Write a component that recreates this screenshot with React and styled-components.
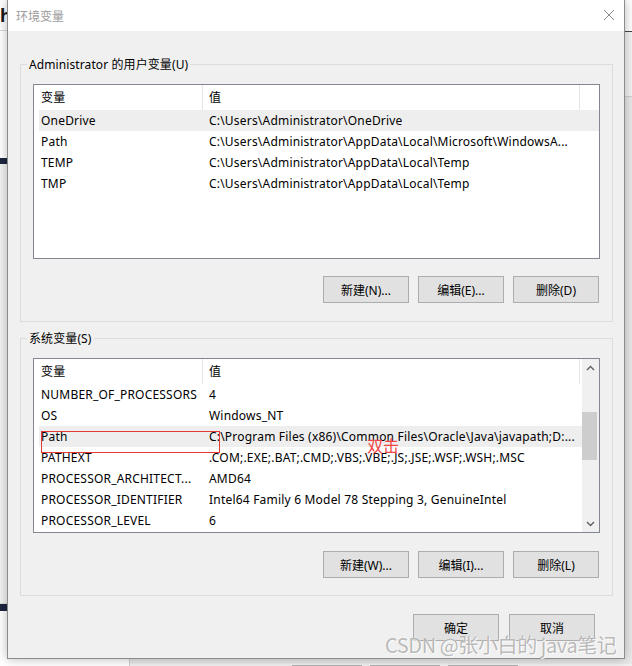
import styled, { createGlobalStyle } from 'styled-components';

const GlobalStyle = createGlobalStyle`
  html, body { margin: 0; padding: 0; }
  body {
    width: 632px;
    height: 666px;
    overflow: hidden;
    font-family: "Noto Sans", "Noto Sans CJK SC", sans-serif;
    font-size: 12px;
    color: #000;
  }
  * { box-sizing: border-box; }
`;

const Desktop = styled.div`
  position: relative;
  width: 632px;
  height: 666px;
  overflow: hidden;
  background: #f0f0f0;
`;

/* window behind the dialog */
const BackWindow = styled.div`
  position: absolute;
  inset: 0;
  display: grid;
  grid-template-columns: 130px 1fr;
`;

const BackNav = styled.div`
  display: flex;
  flex-direction: column;
  background: #fbfbfb;
  border-right: 1px solid #cfcfcf;
`;

const NavBlock = styled.div`
  height: ${(p) => p.$h}px;
  background: ${(p) => p.$bg || 'transparent'};
  border-bottom: 1px solid ${(p) => p.$line || 'transparent'};
  font-size: 18px;
  font-weight: 700;
  line-height: ${(p) => p.$h}px;
  color: #1a1a1a;
  overflow: hidden;
  white-space: nowrap;
`;

const BackMain = styled.div`
  display: flex;
  flex-direction: column;
`;

const BackHeader = styled.div`
  height: 32px;
  background: #fff;
  border-bottom: 1px solid #444;
`;

const BackToolbar = styled.div`
  height: 65px;
  background: #f3f3f3;
  border-bottom: 1px solid #d0d0d0;
`;

const BackContent = styled.div`
  flex: 1;
  background: #e9e9e9;
`;

const BackFooter = styled.div`
  display: flex;
  gap: 8px;
  height: 7px;
  padding-left: 162px;
  overflow: hidden;
  background: #f0f0f0;
`;

const BackButton = styled.div`
  width: 70px;
  height: 24px;
  margin-top: 1px;
  border: 1px solid #adadad;
  background: #e1e1e1;
  color: ${(p) => (p.$disabled ? '#a0a0a0' : '#000')};
  text-align: center;
  line-height: 22px;
  font-size: 12px;
  padding-top: 5px;
`;

/* the dialog */
const Dialog = styled.div`
  position: absolute;
  left: 7px;
  top: 0;
  width: 618px;
  height: 659px;
  display: flex;
  flex-direction: column;
  background: #f0f0f0;
  border: 1px solid #8c8c8c;
  border-top: none;
  box-shadow: 0 0 10px rgba(0, 0, 0, 0.28);
`;

const TitleBar = styled.div`
  height: 31px;
  flex-shrink: 0;
  display: flex;
  align-items: center;
  justify-content: space-between;
  padding: 0 9px 0 8px;
  background: #fff;
`;

const Title = styled.span`
  font-family: "Noto Sans CJK SC", sans-serif;
  font-size: 12px;
  color: #9b9b9b;
`;

const CloseButton = styled.div`
  width: 12px;
  height: 12px;
  display: flex;
  margin-top: -1px;
`;

const Body = styled.div`
  display: flex;
  flex-direction: column;
  padding: 0 11px 0 12px;
`;

const Group = styled.fieldset`
  margin: ${(p) => p.$top}px 0 0;
  padding: 11px 12px ${(p) => p.$bottom}px 12px;
  border: 1px solid #dcdcdc;
  min-inline-size: 0;
`;

const Legend = styled.legend`
  margin-left: -6px;
  padding: 1px 2px 0;
  line-height: 16px;
  font-size: 12px;
  letter-spacing: 0.1px;
`;

const ListBox = styled.div`
  position: relative;
  height: 175px;
  display: flex;
  border: 1px solid #828790;
  background: #fff;
`;

const Table = styled.div`
  flex: 1;
  padding-left: 5px;
  overflow: hidden;
`;

const Row = styled.div`
  display: grid;
  grid-template-columns: 164px 377px;
  height: ${(p) => (p.$header ? 25 : 21)}px;
  background: ${(p) => (p.$selected ? '#eeeeee' : 'transparent')};
`;

const Cell = styled.div`
  padding-left: ${(p) => (p.$first ? 2 : 6)}px;
  line-height: ${(p) => (p.$header ? 25 : 21)}px;
  letter-spacing: 0.2px;
  white-space: nowrap;
  overflow: hidden;
  border-right: 1px solid ${(p) => (p.$header ? '#e5e5e5' : 'transparent')};
`;

const ScrollBar = styled.div`
  width: 17px;
  display: flex;
  flex-direction: column;
  background: #f0f0f0;
`;

const ScrollArrow = styled.div`
  height: 17px;
  display: flex;
  align-items: center;
  justify-content: center;
  padding-right: 1px;
`;

const ScrollTrack = styled.div`
  flex: 1;
  padding-top: 36px;
`;

const ScrollThumb = styled.div`
  width: 15px;
  height: 48px;
  background: #cdcdcd;
`;

const ButtonRow = styled.div`
  display: flex;
  justify-content: flex-end;
  gap: ${(p) => p.$gap || 9}px;
  margin-top: ${(p) => p.$top}px;
  padding-right: ${(p) => p.$right || 0}px;
`;

const Button = styled.div`
  width: 86px;
  height: 27px;
  display: flex;
  align-items: center;
  justify-content: center;
  border: 1px solid #adadad;
  background: #e1e1e1;
  font-size: 12px;
`;

const Mark = styled.div`
  position: absolute;
  left: 7px;
  top: 72px;
  width: 179px;
  height: 22px;
  border: 1px solid #e53935;
`;

const Note = styled.div`
  position: absolute;
  left: 333px;
  top: 77px;
  font-family: "Noto Sans CJK SC", sans-serif;
  font-size: 16px;
  line-height: 18px;
  color: #f44545;
`;

const Watermark = styled.div`
  position: absolute;
  left: 385px;
  top: 632px;
  font-family: "Noto Sans CJK SC", sans-serif;
  font-size: 20px;
  line-height: 26px;
  letter-spacing: -0.4px;
  white-space: nowrap;
  color: rgba(140, 140, 140, 0.62);
  text-shadow: 0 0 1px #fff, 1px 1px 0 rgba(255, 255, 255, 0.8);
`;

const userVars = [
  ['OneDrive', 'C:\\Users\\Administrator\\OneDrive'],
  ['Path', 'C:\\Users\\Administrator\\AppData\\Local\\Microsoft\\WindowsA...'],
  ['TEMP', 'C:\\Users\\Administrator\\AppData\\Local\\Temp'],
  ['TMP', 'C:\\Users\\Administrator\\AppData\\Local\\Temp'],
];

const systemVars = [
  ['NUMBER_OF_PROCESSORS', '4'],
  ['OS', 'Windows_NT'],
  ['Path', 'C:\\Program Files (x86)\\Common Files\\Oracle\\Java\\javapath;D:...'],
  ['PATHEXT', '.COM;.EXE;.BAT;.CMD;.VBS;.VBE;.JS;.JSE;.WSF;.WSH;.MSC'],
  ['PROCESSOR_ARCHITECT...', 'AMD64'],
  ['PROCESSOR_IDENTIFIER', 'Intel64 Family 6 Model 78 Stepping 3, GenuineIntel'],
  ['PROCESSOR_LEVEL', '6'],
];

const Chevron = ({ up }) => (
  <svg width="9" height="6" viewBox="0 0 9 6">
    <polyline
      points={up ? '1,5 4.5,1.5 8,5' : '1,1 4.5,4.5 8,1'}
      fill="none"
      stroke="#606060"
      strokeWidth="1.4"
    />
  </svg>
);

const VarTable = ({ rows, selected }) => (
  <Table>
    <Row $header>
      <Cell $header $first>变量</Cell>
      <Cell $header>值</Cell>
    </Row>
    {rows.map(([name, value], i) => (
      <Row key={name} $selected={i === selected}>
        <Cell $first>{name}</Cell>
        <Cell>{value}</Cell>
      </Row>
    ))}
  </Table>
);

export default function App() {
  return (
    <Desktop>
      <GlobalStyle />
      <BackWindow>
        <BackNav>
          <NavBlock $h={31} $bg="#fff" $line="#d8d8d8">h</NavBlock>
          <NavBlock $h={127} $bg="#fff" />
          <NavBlock $h={6} $bg="#1b2640" />
          <NavBlock $h={440} $bg="#f2f2f2" $line="#dcdcdc" />
          <NavBlock $h={7} $bg="#1b2640" />
          <NavBlock $h={60} $bg="#fff" />
        </BackNav>
        <BackMain>
          <BackHeader />
          <BackToolbar />
          <BackContent />
          <BackFooter>
            <BackButton>确定</BackButton>
            <BackButton>取消</BackButton>
            <BackButton $disabled>应用(A)</BackButton>
          </BackFooter>
        </BackMain>
      </BackWindow>

      <Dialog>
        <TitleBar>
          <Title>环境变量</Title>
          <CloseButton>
            <svg width="12" height="12" viewBox="0 0 12 12">
              <path d="M1 1 L11 11 M11 1 L1 11" stroke="#8a8a8a" strokeWidth="1" fill="none" />
            </svg>
          </CloseButton>
        </TitleBar>
        <Body>
          <Group $top={25} $bottom={18}>
            <Legend>Administrator 的用户变量(U)</Legend>
            <ListBox>
              <VarTable rows={userVars} selected={0} />
            </ListBox>
            <ButtonRow $top={17} $right={1}>
              <Button>新建(N)...</Button>
              <Button>编辑(E)...</Button>
              <Button>删除(D)</Button>
            </ButtonRow>
          </Group>

          <Group $top={8} $bottom={17}>
            <Legend>系统变量(S)</Legend>
            <ListBox>
              <VarTable rows={systemVars} selected={2} />
              <ScrollBar>
                <ScrollArrow>
                  <Chevron up />
                </ScrollArrow>
                <ScrollTrack>
                  <ScrollThumb />
                </ScrollTrack>
                <ScrollArrow>
                  <Chevron />
                </ScrollArrow>
              </ScrollBar>
              <Mark />
              <Note>双击</Note>
            </ListBox>
            <ButtonRow $top={18} $right={1}>
              <Button>新建(W)...</Button>
              <Button>编辑(I)...</Button>
              <Button>删除(L)</Button>
            </ButtonRow>
          </Group>

          <ButtonRow $top={18} $right={18} $gap={10}>
            <Button>确定</Button>
            <Button>取消</Button>
          </ButtonRow>
        </Body>
      </Dialog>

      <Watermark>CSDN @张小白的 java笔记</Watermark>
    </Desktop>
  );
}
